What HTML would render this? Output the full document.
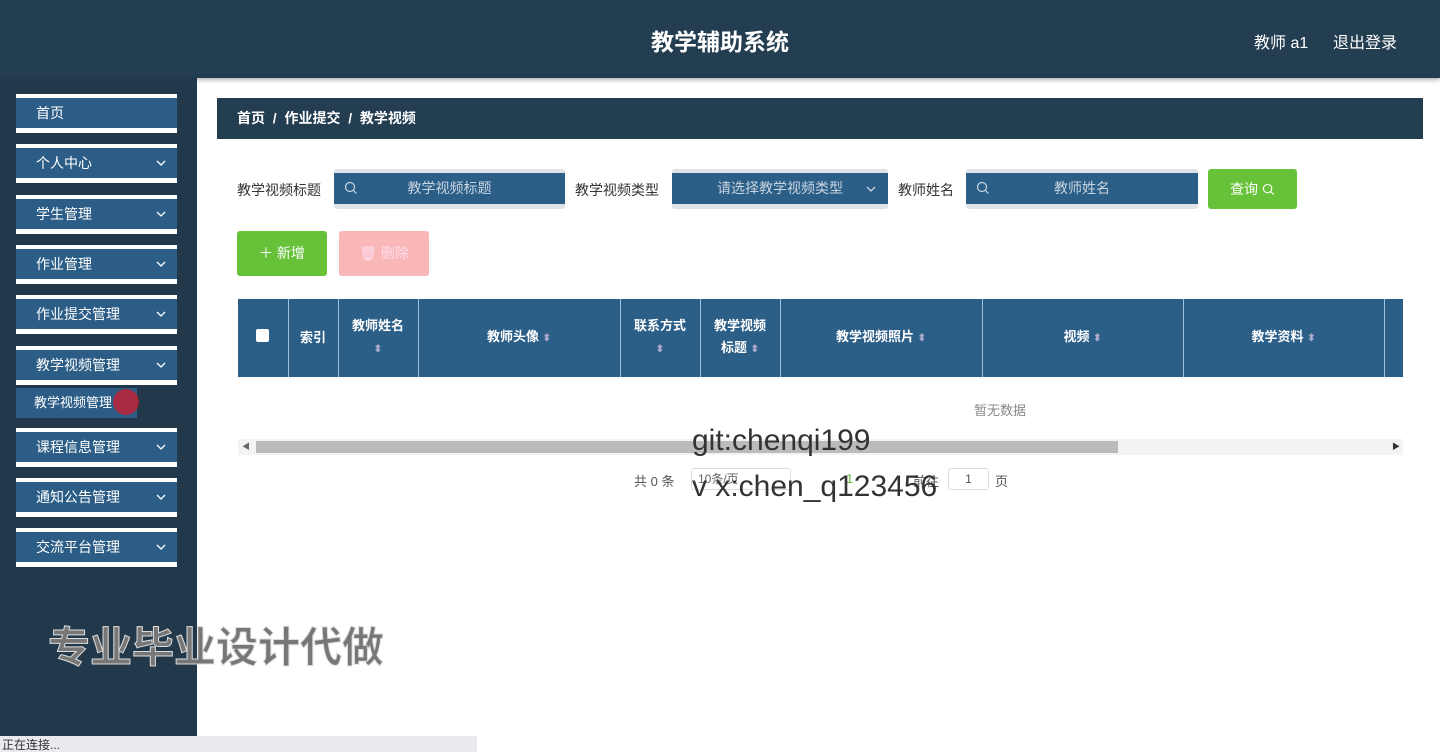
<!DOCTYPE html>
<html><head><meta charset="utf-8"><style>
*{margin:0;padding:0;box-sizing:border-box}
body{width:1440px;height:752px;overflow:hidden;background:#fff;font-family:"Liberation Sans","Noto Sans CJK SC",sans-serif;position:relative}
.abs{position:absolute}
.hdr{left:0;top:0;width:1440px;height:78px;background:#233d51;box-shadow:0 2px 4px rgba(0,0,0,.3)}
.side{left:0;top:78px;width:197px;height:674px;background:#22394b}
.mi{position:absolute;left:16px;width:161px;height:39px;background:#fff}
.mi div{position:absolute;left:0;top:4px;width:161px;height:30px;background:#2c5d86;color:#fff;font-size:14px;line-height:31px;padding-left:20px}
.mi svg{position:absolute;right:11px;top:12px}
.bc{left:217px;top:98px;width:1206px;height:41px;background:#233d51;color:#fff;font-size:14px;font-weight:bold;line-height:41px;padding-left:20px}
.lbl{font-size:14px;color:#333;top:180px}
.inp{height:40px;top:169px;background:#2c5f88;border-top:4px solid #dfe3e8;border-bottom:5px solid #dfe3e8;border-radius:3px;color:#c8d4e0;font-size:14px;line-height:31px;text-align:center}
.inp svg{position:absolute;left:10px;top:8px}
.btn{border-radius:3px;color:#fff;font-size:14px;text-align:center}
table{border-collapse:collapse;position:absolute;left:238px;top:299px;width:1165px;height:78px}
th{background:#2c5f88;color:#fff;font-size:13px;border-left:1px solid #9ec1e0;font-weight:bold;line-height:22px}
.ar{color:#aac;font-size:10px}
</style></head><body>
<div class="abs hdr"></div>
<div class="abs" style="left:0;width:1440px;top:23px;text-align:center;color:#fff;font-size:23px;font-weight:bold">教学辅助系统</div>
<div class="abs" style="left:1254px;top:29px;color:#fff;font-size:16px">教师 a1</div>
<div class="abs" style="left:1333px;top:29px;color:#fff;font-size:16px">退出登录</div>
<div class="abs side"></div>
<div class="mi" style="top:94px"><div>首页</div></div>
<div class="mi" style="top:144px"><div>个人中心<svg width="10" height="7" viewBox="0 0 10 7"><path d="M1 1l4 4 4-4" stroke="#fff" fill="none" stroke-width="1.3"/></svg></div></div>
<div class="mi" style="top:195px"><div>学生管理<svg width="10" height="7" viewBox="0 0 10 7"><path d="M1 1l4 4 4-4" stroke="#fff" fill="none" stroke-width="1.3"/></svg></div></div>
<div class="mi" style="top:245px"><div>作业管理<svg width="10" height="7" viewBox="0 0 10 7"><path d="M1 1l4 4 4-4" stroke="#fff" fill="none" stroke-width="1.3"/></svg></div></div>
<div class="mi" style="top:295px"><div>作业提交管理<svg width="10" height="7" viewBox="0 0 10 7"><path d="M1 1l4 4 4-4" stroke="#fff" fill="none" stroke-width="1.3"/></svg></div></div>
<div class="mi" style="top:346px"><div>教学视频管理<svg width="10" height="7" viewBox="0 0 10 7"><path d="M1 1l4 4 4-4" stroke="#fff" fill="none" stroke-width="1.3"/></svg></div></div>
<div class="abs" style="left:16px;top:388px;width:121px;height:30px;background:#2c5d86;color:#fff;font-size:13px;line-height:30px;padding-left:18px">教学视频管理</div>
<div class="abs" style="left:113px;top:389px;width:26px;height:26px;border-radius:50%;background:rgba(200,30,50,.8)"></div>
<div class="mi" style="top:428px"><div>课程信息管理<svg width="10" height="7" viewBox="0 0 10 7"><path d="M1 1l4 4 4-4" stroke="#fff" fill="none" stroke-width="1.3"/></svg></div></div>
<div class="mi" style="top:478px"><div>通知公告管理<svg width="10" height="7" viewBox="0 0 10 7"><path d="M1 1l4 4 4-4" stroke="#fff" fill="none" stroke-width="1.3"/></svg></div></div>
<div class="mi" style="top:528px"><div>交流平台管理<svg width="10" height="7" viewBox="0 0 10 7"><path d="M1 1l4 4 4-4" stroke="#fff" fill="none" stroke-width="1.3"/></svg></div></div>
<div class="abs bc">首页 &nbsp;/&nbsp; 作业提交 &nbsp;/&nbsp; 教学视频</div>
<div class="abs lbl" style="left:237px">教学视频标题</div>
<div class="abs inp" style="left:334px;width:231px"><svg width="14" height="14" viewBox="0 0 14 14"><circle cx="6" cy="6" r="4.5" stroke="#c8d4e0" fill="none" stroke-width="1.2"/><path d="M9.5 9.5l3 3" stroke="#c8d4e0" stroke-width="1.2"/></svg>教学视频标题</div>
<div class="abs lbl" style="left:575px">教学视频类型</div>
<div class="abs inp" style="left:672px;width:216px">请选择教学视频类型<svg width="10" height="7" viewBox="0 0 10 7" style="left:auto;right:12px;top:13px"><path d="M1 1l4 4 4-4" stroke="#c8d4e0" fill="none" stroke-width="1.3"/></svg></div>
<div class="abs lbl" style="left:898px">教师姓名</div>
<div class="abs inp" style="left:966px;width:232px"><svg width="14" height="14" viewBox="0 0 14 14"><circle cx="6" cy="6" r="4.5" stroke="#c8d4e0" fill="none" stroke-width="1.2"/><path d="M9.5 9.5l3 3" stroke="#c8d4e0" stroke-width="1.2"/></svg>教师姓名</div>
<div class="abs btn" style="left:1208px;top:169px;width:89px;height:40px;background:#67c23a;line-height:40px">查询 <svg width="13" height="13" viewBox="0 0 14 14" style="vertical-align:-2px"><circle cx="6" cy="6" r="4.5" stroke="#fff" fill="none" stroke-width="1.2"/><path d="M9.5 9.5l3 3" stroke="#fff" stroke-width="1.2"/></svg></div>
<div class="abs btn" style="left:237px;top:231px;width:90px;height:45px;background:#67c23a;line-height:45px">＋ 新增</div>
<div class="abs btn" style="left:339px;top:231px;width:90px;height:45px;background:#f9b7b7;line-height:45px;color:#fde">🗑 删除</div>
<table><tr>
<th style="width:50px;border-left:none"><span style="display:inline-block;width:13px;height:13px;background:#fff;border-radius:2px"></span></th>
<th style="width:50px">索引</th>
<th style="width:80px">教师姓名<br><span class="ar">⬍</span></th>
<th style="width:202px">教师头像 <span class="ar">⬍</span></th>
<th style="width:80px">联系方式<br><span class="ar">⬍</span></th>
<th style="width:80px">教学视频<br>标题 <span class="ar">⬍</span></th>
<th style="width:202px">教学视频照片 <span class="ar">⬍</span></th>
<th style="width:201px">视频 <span class="ar">⬍</span></th>
<th style="width:201px">教学资料 <span class="ar">⬍</span></th>
<th style="width:19px"></th>
</tr></table>
<div class="abs" style="left:974px;top:400px;font-size:13px;color:#888">暂无数据</div>
<div class="abs" style="left:238px;top:439px;width:1165px;height:16px;background:#f3f3f3"></div>
<div class="abs" style="left:256px;top:441px;width:862px;height:12px;background:#bbb"></div>
<div class="abs" style="left:242px;top:441px;font-size:8px;color:#666">◀</div>
<div class="abs" style="left:1392px;top:441px;font-size:8px;color:#333">▶</div>
<div class="abs" style="left:634px;top:471px;font-size:13px;color:#555">共 0 条</div>
<div class="abs" style="left:691px;top:468px;width:100px;height:22px;border:1px solid #ddd;border-radius:3px;font-size:12px;color:#666;padding-left:6px;line-height:20px">10条/页</div>
<div class="abs" style="left:846px;top:471px;font-size:13px;color:#67c23a">1</div>
<div class="abs" style="left:913px;top:471px;font-size:13px;color:#555">前往</div>
<div class="abs" style="left:948px;top:468px;width:41px;height:22px;border:1px solid #ddd;border-radius:3px;font-size:12px;color:#555;text-align:center;line-height:20px">1</div>
<div class="abs" style="left:995px;top:471px;font-size:13px;color:#555">页</div>
<div class="abs" style="left:692px;top:424px;font-size:30px;color:#333">git:chenqi199</div>
<div class="abs" style="left:692px;top:470px;font-size:30px;color:#333">v x:chen_q123456</div>
<div class="abs" style="left:48px;top:614px;font-size:42px;font-weight:bold;color:#777;-webkit-text-stroke:1px #ddd;letter-spacing:0px">专业毕业设计代做</div>
<div class="abs" style="left:0;top:736px;width:477px;height:16px;background:#e8eaee;font-size:12px;color:#333;line-height:18px;padding-left:2px">正在连接...</div>
</body></html>
